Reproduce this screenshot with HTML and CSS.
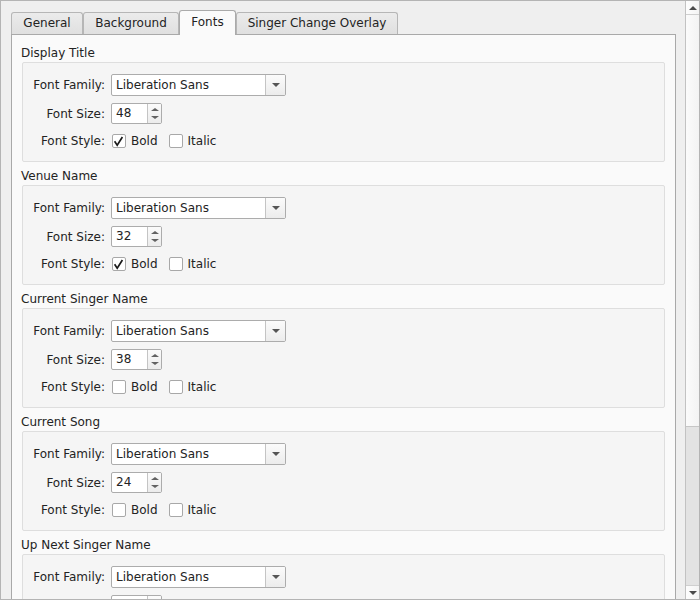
FILE: index.html
```html
<!DOCTYPE html>
<html>
<head>
<meta charset="utf-8">
<link rel="stylesheet" href="styles.css">
</head>
<body>
<div class="window">
  <div class="viewport">
    <div class="tabs">
      <div class="tab tab-general">General</div>
      <div class="tab tab-background">Background</div>
      <div class="tab tab-fonts selected">Fonts</div>
      <div class="tab tab-overlay">Singer Change Overlay</div>
    </div>
    <div class="pane">
      <div class="section">
        <div class="title">Display Title</div>
        <div class="group">
          <div class="label">Font Family:</div>
          <div class="combo"><span class="combo-text">Liberation Sans</span><span class="combo-btn"><span class="tri-down"></span></span></div>
          <div class="label">Font Size:</div>
          <div class="spin"><span class="spin-text">48</span><span class="spin-btns"><span class="tri-up-s"></span><span class="tri-down-s"></span></span></div>
          <div class="label">Font Style:</div>
          <div class="checks">
            <span class="cb"><svg viewBox="0 0 12 12" width="12" height="12"><path d="M1.6 6.3 L4.2 10.2 L9.4 2" fill="none" stroke="#1a1a1a" stroke-width="1.7"/></svg></span><span class="cb-label">Bold</span>
            <span class="cb"></span><span class="cb-label">Italic</span>
          </div>
        </div>
      </div>
      <div class="section">
        <div class="title">Venue Name</div>
        <div class="group">
          <div class="label">Font Family:</div>
          <div class="combo"><span class="combo-text">Liberation Sans</span><span class="combo-btn"><span class="tri-down"></span></span></div>
          <div class="label">Font Size:</div>
          <div class="spin"><span class="spin-text">32</span><span class="spin-btns"><span class="tri-up-s"></span><span class="tri-down-s"></span></span></div>
          <div class="label">Font Style:</div>
          <div class="checks">
            <span class="cb"><svg viewBox="0 0 12 12" width="12" height="12"><path d="M1.6 6.3 L4.2 10.2 L9.4 2" fill="none" stroke="#1a1a1a" stroke-width="1.7"/></svg></span><span class="cb-label">Bold</span>
            <span class="cb"></span><span class="cb-label">Italic</span>
          </div>
        </div>
      </div>
      <div class="section">
        <div class="title">Current Singer Name</div>
        <div class="group">
          <div class="label">Font Family:</div>
          <div class="combo"><span class="combo-text">Liberation Sans</span><span class="combo-btn"><span class="tri-down"></span></span></div>
          <div class="label">Font Size:</div>
          <div class="spin"><span class="spin-text">38</span><span class="spin-btns"><span class="tri-up-s"></span><span class="tri-down-s"></span></span></div>
          <div class="label">Font Style:</div>
          <div class="checks">
            <span class="cb"></span><span class="cb-label">Bold</span>
            <span class="cb"></span><span class="cb-label">Italic</span>
          </div>
        </div>
      </div>
      <div class="section">
        <div class="title">Current Song</div>
        <div class="group">
          <div class="label">Font Family:</div>
          <div class="combo"><span class="combo-text">Liberation Sans</span><span class="combo-btn"><span class="tri-down"></span></span></div>
          <div class="label">Font Size:</div>
          <div class="spin"><span class="spin-text">24</span><span class="spin-btns"><span class="tri-up-s"></span><span class="tri-down-s"></span></span></div>
          <div class="label">Font Style:</div>
          <div class="checks">
            <span class="cb"></span><span class="cb-label">Bold</span>
            <span class="cb"></span><span class="cb-label">Italic</span>
          </div>
        </div>
      </div>
      <div class="section">
        <div class="title">Up Next Singer Name</div>
        <div class="group">
          <div class="label">Font Family:</div>
          <div class="combo"><span class="combo-text">Liberation Sans</span><span class="combo-btn"><span class="tri-down"></span></span></div>
          <div class="label">Font Size:</div>
          <div class="spin"><span class="spin-text">28</span><span class="spin-btns"><span class="tri-up-s"></span><span class="tri-down-s"></span></span></div>
          <div class="label">Font Style:</div>
          <div class="checks">
            <span class="cb"></span><span class="cb-label">Bold</span>
            <span class="cb"></span><span class="cb-label">Italic</span>
          </div>
        </div>
      </div>
    </div>
  </div>
  <div class="scrollbar">
    <div class="sb-btn up"><span class="sb-tri-up"></span></div>
    <div class="sb-thumb"></div>
    <div class="sb-track"></div>
    <div class="sb-btn down"><span class="sb-tri-down"></span></div>
  </div>
</div>
</body>
</html>
```
FILE: styles.css
```css
* { box-sizing: border-box; }
html, body { margin: 0; padding: 0; }
body {
  font-family: "DejaVu Sans", sans-serif;
  font-size: 12px;
  color: #232323;
  background: #efefef;
}
.window {
  width: 700px;
  height: 600px;
  border: 1px solid #b4b4b4;
  display: flex;
  overflow: hidden;
  background: #efefef;
}
.viewport {
  flex: 1;
  overflow: hidden;
  padding: 9px 9px 0 10px;
}
.tabs {
  display: flex;
  align-items: flex-end;
  height: 24px;
}
.tab {
  height: 22px;
  padding: 0;
  text-align: center;
  border: 1px solid #b6b6b6;
  border-bottom: none;
  border-radius: 3px 3px 0 0;
  background: linear-gradient(#ebebeb, #e0e0e0);
  line-height: 20px;
  white-space: nowrap;
  flex: none;
}
.tab-general { width: 72px; }
.tab-background { width: 96px; }
.tab-fonts { width: 57px; }
.tab-overlay { width: 162px; }
.tab.selected {
  height: 25px;
  margin-bottom: -1px;
  background: #fafafa;
  border-color: #aaaaaa;
  line-height: 22px;
  position: relative;
  z-index: 1;
}
.pane {
  border: 1px solid #a9a9a9;
  background: #fafafa;
  padding: 10px 10px 0 10px;
}
.section + .section { margin-top: 6px; }
.title {
  line-height: 16px;
  height: 14px;
  margin: 0 0 3px -1px;
  white-space: nowrap;
}
.group {
  height: 100px;
  border: 1px solid #dedede;
  border-radius: 2px;
  background: #f5f5f5;
  padding: 11px 10px 10px 10px;
  display: grid;
  grid-template-columns: 72px auto;
  grid-template-rows: 22px 23px 20px;
  column-gap: 6px;
  row-gap: 6px;
  align-items: center;
  justify-items: start;
}
.label {
  justify-self: end;
  white-space: nowrap;
}
.combo {
  width: 175px;
  height: 22px;
  border: 1px solid #acacac;
  border-radius: 2px;
  background: #fff;
  display: flex;
  align-items: stretch;
}
.combo-text {
  flex: 1;
  padding-left: 4px;
  line-height: 20px;
  white-space: nowrap;
}
.combo-btn {
  width: 20px;
  border-left: 1px solid #c4c4c4;
  background: linear-gradient(#fbfbfb, #ececec);
  display: flex;
  align-items: center;
  justify-content: center;
  border-radius: 0 1px 1px 0;
}
.tri-down {
  width: 0; height: 0;
  border-left: 4px solid transparent;
  border-right: 4px solid transparent;
  border-top: 4px solid #555;
}
.spin {
  width: 51px;
  height: 21px;
  border: 1px solid #acacac;
  border-radius: 2px;
  background: #fff;
  display: flex;
}
.spin-text {
  flex: 1;
  padding-left: 4px;
  line-height: 19px;
}
.spin-btns {
  width: 14px;
  border-left: 1px solid #c4c4c4;
  background: linear-gradient(#fbfbfb, #ececec);
  display: flex;
  flex-direction: column;
  align-items: center;
  justify-content: center;
  gap: 5px;
  border-radius: 0 1px 1px 0;
}
.tri-up-s {
  width: 0; height: 0;
  border-left: 4px solid transparent;
  border-right: 4px solid transparent;
  border-bottom: 3px solid #626262;
}
.tri-down-s {
  width: 0; height: 0;
  border-left: 4px solid transparent;
  border-right: 4px solid transparent;
  border-top: 3px solid #626262;
}
.checks {
  display: flex;
  align-items: center;
  margin-left: 1px;
}
.cb {
  width: 14px;
  height: 14px;
  border: 1px solid #a8a8a8;
  border-radius: 2px;
  background: #fff;
  display: flex;
}
.cb-label {
  margin-left: 5px;
  margin-right: 11px;
}
.scrollbar {
  width: 14px;
  border-left: 1px solid #c2c2c2;
  display: flex;
  flex-direction: column;
  background: #efefef;
}
.sb-btn {
  height: 14px;
  background: linear-gradient(to right, #fdfdfd, #f3f3f3);
  display: flex;
  align-items: center;
  justify-content: center;
}
.sb-btn.up { border-bottom: 1px solid #cfcfcf; }
.sb-btn.down { border-top: 1px solid #cfcfcf; }
.sb-tri-up {
  width: 0; height: 0;
  border-left: 4px solid transparent;
  border-right: 4px solid transparent;
  border-bottom: 4px solid #4a4a4a;
}
.sb-tri-down {
  width: 0; height: 0;
  border-left: 4px solid transparent;
  border-right: 4px solid transparent;
  border-top: 4px solid #4a4a4a;
}
.sb-thumb {
  height: 412px;
  background: linear-gradient(to right, #fbfbfb, #f3f3f3);
  border-bottom: 1px solid #c6c6c6;
}
.sb-track {
  flex: 1;
  background: #e3e3e3;
}
```
